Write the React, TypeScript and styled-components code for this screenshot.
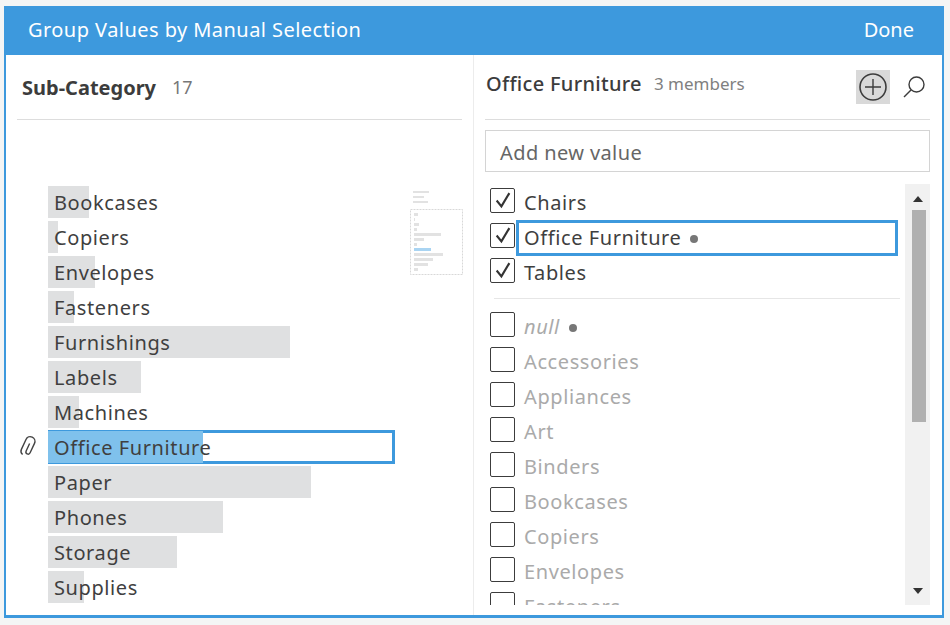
import React from "react";
import styled, { createGlobalStyle } from "styled-components";

const GlobalStyle = createGlobalStyle`
  html, body {
    margin: 0;
    padding: 0;
    background: #f4f5f5;
    font-family: "Noto Sans", "Open Sans", sans-serif;
  }
  * {
    box-sizing: border-box;
  }
`;

const Dialog = styled.div`
  position: relative;
  width: 940px;
  height: 612px;
  margin: 6px 0 0 4px;
  background: #fff;
  border: solid #3d99dd;
  border-width: 0 2px 3px 2px;
  display: flex;
  flex-direction: column;
  overflow: hidden;
`;

const TitleBar = styled.div`
  height: 49px;
  flex: none;
  background: #3d99dd;
  color: #fff;
  font-size: 20px;
  display: flex;
  align-items: center;
  justify-content: space-between;
  padding: 0 28px 2px 22px;
`;

const DialogTitle = styled.span`
  letter-spacing: 0.45px;
`;

const Columns = styled.div`
  flex: 1;
  display: flex;
  min-height: 0;
`;

const LeftPane = styled.div`
  position: relative;
  width: 468px;
  flex: none;
  padding: 0 11px;
  border-right: 1px solid #ececec;
`;

const RightPane = styled.div`
  flex: 1;
  min-width: 0;
  padding: 0 12px 0 11px;
`;

const PaneHeader = styled.div`
  height: 65px;
  border-bottom: 1px solid #dddddd;
  display: flex;
  align-items: center;
`;

const LeftHeader = styled(PaneHeader)`
  padding-left: 5px;
`;

const RightHeader = styled(PaneHeader)`
  padding: 0 0 7px 1px;
`;

const PaneTitle = styled.span<{ $bold?: boolean }>`
  font-size: 20px;
  font-weight: ${(p) => (p.$bold ? 700 : 500)};
  letter-spacing: ${(p) => (p.$bold ? "0" : "0.3px")};
  color: #3c3c3c;
`;

const Count = styled.span`
  font-size: 18px;
  color: #777;
  margin-left: 16px;
`;

const Members = styled.span`
  font-size: 17px;
  color: #808080;
  margin-left: 12px;
`;

const Tools = styled.div`
  margin: 6px 0 0 auto;
  display: flex;
  align-items: center;
  gap: 12px;
  padding-right: 4px;
`;

const ToolButton = styled.div<{ $active?: boolean }>`
  width: ${(p) => (p.$active ? "34px" : "24px")};
  height: 34px;
  display: flex;
  align-items: center;
  justify-content: center;
  background: ${(p) => (p.$active ? "#d9d9d9" : "transparent")};
`;

const BarList = styled.div`
  display: flex;
  flex-direction: column;
  gap: 3px;
  padding: 66px 0 0 31px;
`;

const BarRow = styled.div<{ $selected?: boolean }>`
  position: relative;
  height: ${(p) => (p.$selected ? "34px" : "32px")};
  margin: ${(p) => (p.$selected ? "-1px 0" : "0")};
  width: 347px;
  display: flex;
  align-items: center;
  padding-left: 6px;
  font-size: 20px;
  letter-spacing: 0.6px;
  color: #3f3f3f;
  ${(p) => (p.$selected ? "outline: 3px solid #3d99dd; outline-offset: -3px;" : "")}
`;

const BarFill = styled.div<{ $selected?: boolean }>`
  position: absolute;
  left: 0;
  top: ${(p) => (p.$selected ? "1px" : "0")};
  bottom: ${(p) => (p.$selected ? "1px" : "0")};
  background: ${(p) => (p.$selected ? "#7fc1ec" : "#dfe0e1")};
`;

const BarLabel = styled.span`
  position: relative;
`;

const Clip = styled.svg`
  position: absolute;
  left: -31px;
  top: 5px;
`;

const MiniMap = styled.svg`
  position: absolute;
  left: 404px;
  top: 135px;
`;

const AddBox = styled.div`
  height: 42px;
  margin-top: 10px;
  border: 1px solid #d4d4d4;
  display: flex;
  align-items: center;
  padding: 2px 0 0 14px;
  font-size: 20px;
  letter-spacing: 0.4px;
  color: #666;
`;

const ListArea = styled.div`
  position: relative;
  height: 421px;
  margin-top: 12px;
  overflow: hidden;
`;

const CheckRows = styled.div`
  padding: 1px 0 0 5px;
  display: flex;
  flex-direction: column;
`;

const CheckRow = styled.div`
  height: 35px;
  display: flex;
  align-items: center;
  gap: 1px;
  flex: none;
`;

const Box = styled.div`
  width: 25px;
  height: 25px;
  flex: none;
  margin-bottom: 5px;
  border: 1px solid #3c3c3c;
  border-radius: 2px;
  background: #fff;
  display: flex;
  align-items: center;
  justify-content: center;
`;

const CheckLabel = styled.div<{ $focused?: boolean; $muted?: boolean; $italic?: boolean }>`
  height: 36px;
  flex: ${(p) => (p.$focused ? "none" : "0 1 auto")};
  width: ${(p) => (p.$focused ? "382px" : "auto")};
  display: flex;
  align-items: center;
  gap: 9px;
  padding-left: 8px;
  font-size: 20px;
  letter-spacing: 0.6px;
  font-style: ${(p) => (p.$italic ? "italic" : "normal")};
  color: ${(p) => (p.$muted ? "#aaaaaa" : "#3f3f3f")};
  ${(p) => (p.$focused ? "outline: 3px solid #3d99dd; outline-offset: -3px;" : "")}
`;

const Dot = styled.span`
  width: 8px;
  height: 8px;
  border-radius: 50%;
  background: #777;
  margin-top: 2px;
`;

const Separator = styled.div`
  height: 1px;
  flex: none;
  margin: 8px 30px 10px 4px;
  background: #e6e6e6;
`;

const ScrollTrack = styled.div`
  position: absolute;
  right: 0;
  top: 0;
  bottom: 0;
  width: 25px;
  background: #f1f1f1;
`;

const ScrollThumb = styled.div`
  position: absolute;
  left: 7px;
  top: 26px;
  width: 14px;
  height: 212px;
  background: #b0b0b0;
`;

const Arrow = styled.div<{ $down?: boolean }>`
  position: absolute;
  left: 8px;
  ${(p) => (p.$down ? "bottom: 11px;" : "top: 12px;")}
  width: 0;
  height: 0;
  border-left: 5px solid transparent;
  border-right: 5px solid transparent;
  ${(p) => (p.$down ? "border-top: 6px solid #333;" : "border-bottom: 6px solid #333;")}
`;

const bars = [
  { name: "Bookcases", width: 41 },
  { name: "Copiers", width: 10 },
  { name: "Envelopes", width: 47 },
  { name: "Fasteners", width: 26 },
  { name: "Furnishings", width: 242 },
  { name: "Labels", width: 93 },
  { name: "Machines", width: 31 },
  { name: "Office Furniture", width: 155, selected: true },
  { name: "Paper", width: 263 },
  { name: "Phones", width: 175 },
  { name: "Storage", width: 129 },
  { name: "Supplies", width: 36 },
];

const checked = ["Chairs", "Office Furniture", "Tables"];
const unchecked = [
  "null",
  "Accessories",
  "Appliances",
  "Art",
  "Binders",
  "Bookcases",
  "Copiers",
  "Envelopes",
  "Fasteners",
];

function App() {
  return (
    <>
      <GlobalStyle />
      <Dialog>
        <TitleBar>
          <DialogTitle>Group Values by Manual Selection</DialogTitle>
          <span>Done</span>
        </TitleBar>
        <Columns>
          <LeftPane>
            <LeftHeader>
              <PaneTitle $bold>Sub-Category</PaneTitle>
              <Count>17</Count>
            </LeftHeader>
            <BarList>
              {bars.map((bar) => (
                <BarRow key={bar.name} $selected={bar.selected}>
                  <BarFill $selected={bar.selected} style={{ width: bar.width }} />
                  <BarLabel>{bar.name}</BarLabel>
                  {bar.selected && (
                    <Clip width="22" height="24" viewBox="0 0 20 22" fill="none" stroke="#444" strokeWidth="1.3">
                      <g transform="rotate(25 10 11)">
                        <path d="M10 7.5 V15 a2 2 0 0 0 4 0 V5.5 a4.3 4.3 0 0 0 -8.6 0 V15.5 a4 4 0 0 0 3 3.8" />
                      </g>
                    </Clip>
                  )}
                </BarRow>
              ))}
            </BarList>
            <MiniMap width="54" height="86" viewBox="0 0 54 86">
              <rect x="3" y="1" width="16" height="2" fill="#e2e2e2" />
              <rect x="3" y="6" width="11" height="2" fill="#e2e2e2" />
              <rect x="3" y="11" width="15" height="2" fill="#e2e2e2" />
              <rect x="0.5" y="19.5" width="52" height="65" fill="none" stroke="#d8d8d8" strokeDasharray="2 1" />
              <rect x="4" y="23" width="4" height="3" fill="#e2e2e2" />
              <rect x="4" y="28" width="1" height="3" fill="#e2e2e2" />
              <rect x="4" y="33" width="5" height="3" fill="#e2e2e2" />
              <rect x="4" y="38" width="3" height="3" fill="#e2e2e2" />
              <rect x="4" y="43" width="27" height="3" fill="#e2e2e2" />
              <rect x="4" y="48" width="10" height="3" fill="#e2e2e2" />
              <rect x="4" y="53" width="3" height="3" fill="#e2e2e2" />
              <rect x="4" y="58" width="17" height="3" fill="#a9d4f2" />
              <rect x="4" y="63" width="29" height="3" fill="#e2e2e2" />
              <rect x="4" y="68" width="19" height="3" fill="#e2e2e2" />
              <rect x="4" y="73" width="14" height="3" fill="#e2e2e2" />
              <rect x="4" y="78" width="4" height="3" fill="#e2e2e2" />
            </MiniMap>
          </LeftPane>
          <RightPane>
            <RightHeader>
              <PaneTitle>Office Furniture</PaneTitle>
              <Members>3 members</Members>
              <Tools>
                <ToolButton $active>
                  <svg width="30" height="30" viewBox="0 0 30 30" fill="none" stroke="#3c3c3c">
                    <circle cx="15" cy="15" r="13" strokeWidth="1.6" />
                    <path d="M15 7 V23 M7 15 H23" strokeWidth="1.4" />
                  </svg>
                </ToolButton>
                <ToolButton>
                  <svg width="24" height="24" viewBox="0 0 24 24" fill="none" stroke="#3c3c3c" strokeWidth="1.4">
                    <circle cx="14.5" cy="9.5" r="7.5" />
                    <path d="M9 15 L2 22" />
                  </svg>
                </ToolButton>
              </Tools>
            </RightHeader>
            <AddBox>Add new value</AddBox>
            <ListArea>
              <CheckRows>
                {checked.map((name) => (
                  <CheckRow key={name}>
                    <Box>
                      <svg width="18" height="18" viewBox="0 0 17 17" fill="none" stroke="#333" strokeWidth="2">
                        <path d="M2.5 9 L7 14.5 L14.5 2" />
                      </svg>
                    </Box>
                    <CheckLabel $focused={name === "Office Furniture"}>
                      {name}
                      {name === "Office Furniture" && <Dot />}
                    </CheckLabel>
                  </CheckRow>
                ))}
                <Separator />
                {unchecked.map((name) => (
                  <CheckRow key={name}>
                    <Box />
                    <CheckLabel $muted $italic={name === "null"}>
                      {name}
                      {name === "null" && <Dot />}
                    </CheckLabel>
                  </CheckRow>
                ))}
              </CheckRows>
              <ScrollTrack>
                <Arrow />
                <ScrollThumb />
                <Arrow $down />
              </ScrollTrack>
            </ListArea>
          </RightPane>
        </Columns>
      </Dialog>
    </>
  );
}

export default App;
